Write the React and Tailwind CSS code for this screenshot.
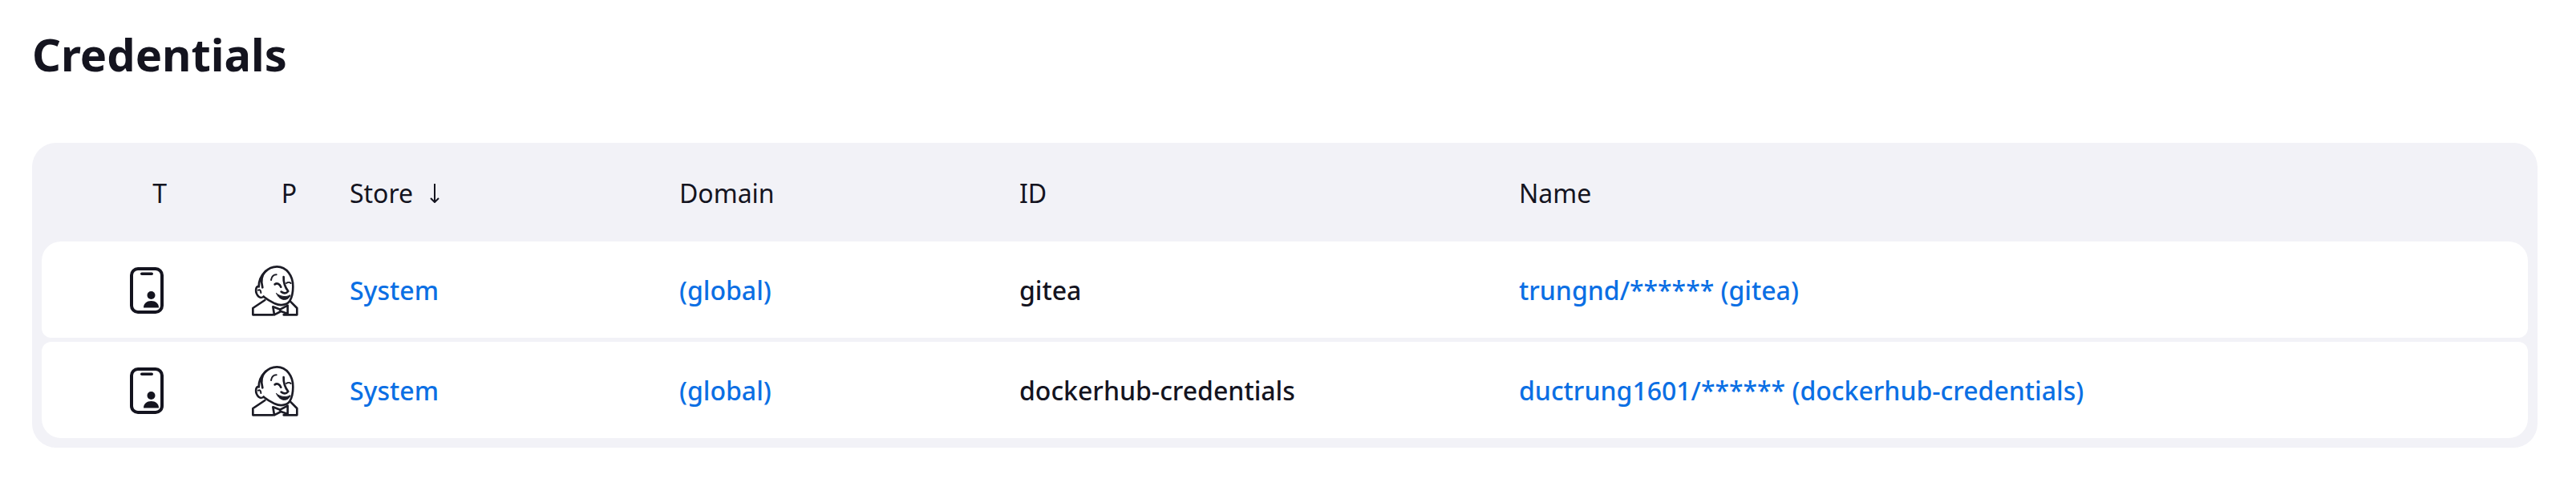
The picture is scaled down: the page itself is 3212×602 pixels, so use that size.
import React from 'react';

const rows = [
  { id: 'gitea', name: 'trungnd/****** (gitea)', shape: 'rounded-t-[24px] rounded-b-[12px]' },
  { id: 'dockerhub-credentials', name: 'ductrung1601/****** (dockerhub-credentials)', shape: 'rounded-t-[12px] rounded-b-[24px]' },
];

const PhoneIcon = () => (
  <svg width="42" height="58" viewBox="0 0 42 58" fill="none">
    <rect x="2" y="2" width="38" height="54" rx="8" stroke="#14141f" strokeWidth="4" />
    <rect x="13" y="6.5" width="16" height="3.6" rx="1.8" fill="#14141f" />
    <circle cx="26.5" cy="35" r="5" fill="#14141f" />
    <path d="M17 50.500c0-5.500 4.200-8.500 9.500-8.500s9.500 3 9.500 8.500z" fill="#14141f" />
  </svg>
);

// butler head, traced by hand
const ButlerIcon = () => (
  <svg width="62" height="66" viewBox="0 0 186 198" fill="none" stroke="#1c1c26" strokeWidth="8" strokeLinecap="round" strokeLinejoin="round" className="-mr-1">
    <path d="M55 135L10 165L10 190L85 190" />
    <path d="M150 140L175 165L175 190L125 190" />
    <path d="M32 85C32 40 68 10 100 10C136 10 161 45 160 85C160 110 156 125 148 138C136 156 110 156 92 148C72 138 60 130 50 122" fill="#fff" />
    <path d="M32 85C20 80 16 108 32 122C38 127 46 126 50 122" fill="#fff" />
    <path d="M58 26C40 46 40 68 46 88" />
    <path d="M30 98C36 94 40 100 40 108" strokeWidth="6" />
    <path d="M78 60C80 48 88 40 98 40" strokeWidth="6" />
    <path d="M92 76C100 70 110 74 115 86" />
    <path d="M135 72C140 68 148 68 152 72" strokeWidth="6" />
    <path d="M125 48C124 66 128 84 142 102C134 112 124 110 116 104" />
    <path d="M98 110C112 122 134 126 150 116C144 138 112 142 98 110Z" fill="#1c1c26" strokeWidth="3" />
    <path d="M85 160L112 170L140 155L140 186L115 177L90 190Z" fill="#fff" />
    <path d="M112 170L112 177" strokeWidth="6" />
  </svg>
);

const SortArrow = () => (
  <svg width="12" height="24" viewBox="0 0 12 24" fill="none" stroke="#14141f" strokeWidth="2">
    <path d="M6 0V23M1 18L6 23L11 18" />
  </svg>
);

export default function App() {
  return (
    <div className="bg-white w-[3212px] h-[602px] pl-10 pr-12 text-[#14141f] font-['Noto_Sans','Open_Sans',sans-serif]">
      <h1 className="pt-[29px] h-[178px] text-[56px] leading-[76px] font-bold">Credentials</h1>

      <div className="bg-[#f2f2f7] rounded-[30px] px-3 pb-3 text-[32px]">
        <div className="flex items-center h-[123px] pt-[2px]">
          <div className="w-[156px] text-right">T</div>
          <div className="w-[162px] text-right">P</div>
          <div className="w-[477px] pl-[66px] flex items-center gap-[21px]">Store <SortArrow /></div>
          <div className="w-[424px]">Domain</div>
          <div className="w-[623px]">ID</div>
          <div>Name</div>
        </div>

        <div className="flex flex-col gap-[5px]">
          {rows.map((row) => (
            <div key={row.id} className={`bg-white h-[120px] flex items-center pt-[2px] ${row.shape}`}>
              <div className="w-[152px] mr-1 flex justify-end"><PhoneIcon /></div>
              <div className="w-[162px] flex justify-end"><ButlerIcon /></div>
              <a className="w-[477px] pl-[66px] font-medium text-[#0b6fe4]">System</a>
              <a className="w-[424px] font-medium text-[#0b6fe4]">(global)</a>
              <div className="w-[623px] font-medium">{row.id}</div>
              <a className="font-medium text-[#0b6fe4]">{row.name}</a>
            </div>
          ))}
        </div>
      </div>
    </div>
  );
}
